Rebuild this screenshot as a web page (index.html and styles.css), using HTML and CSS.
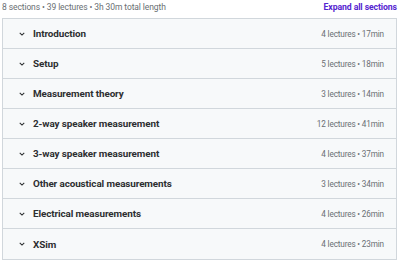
FILE: index.html
```html
<!DOCTYPE html>
<html lang="en">
  <head>
    <meta charset="UTF-8" />
    <meta name="viewport" content="width=device-width, initial-scale=1.0" />
    <title>Course content</title>
    <link rel="stylesheet" href="styles.css">
  </head>
  <body>
    <div class="content">
      <div class="summary">
        <span>8 sections • 39 lectures • 3h 30m total length</span>
        <a class="expand-all">Expand all sections</a>
      </div>

      <div class="sections">
        <div class="section">
          <span class="chevron"><svg viewBox="0 0 8 5"><path d="M1 1l3 3 3-3" /></svg></span>
          <span class="title">Introduction</span>
          <span class="meta">4 lectures • 17min</span>
        </div>
        <div class="section">
          <span class="chevron"><svg viewBox="0 0 8 5"><path d="M1 1l3 3 3-3" /></svg></span>
          <span class="title">Setup</span>
          <span class="meta">5 lectures • 18min</span>
        </div>
        <div class="section">
          <span class="chevron"><svg viewBox="0 0 8 5"><path d="M1 1l3 3 3-3" /></svg></span>
          <span class="title">Measurement theory</span>
          <span class="meta">3 lectures • 14min</span>
        </div>
        <div class="section">
          <span class="chevron"><svg viewBox="0 0 8 5"><path d="M1 1l3 3 3-3" /></svg></span>
          <span class="title">2-way speaker measurement</span>
          <span class="meta">12 lectures • 41min</span>
        </div>
        <div class="section">
          <span class="chevron"><svg viewBox="0 0 8 5"><path d="M1 1l3 3 3-3" /></svg></span>
          <span class="title">3-way speaker measurement</span>
          <span class="meta">4 lectures • 37min</span>
        </div>
        <div class="section">
          <span class="chevron"><svg viewBox="0 0 8 5"><path d="M1 1l3 3 3-3" /></svg></span>
          <span class="title">Other acoustical measurements</span>
          <span class="meta">3 lectures • 34min</span>
        </div>
        <div class="section">
          <span class="chevron"><svg viewBox="0 0 8 5"><path d="M1 1l3 3 3-3" /></svg></span>
          <span class="title">Electrical measurements</span>
          <span class="meta">4 lectures • 26min</span>
        </div>
        <div class="section">
          <span class="chevron"><svg viewBox="0 0 8 5"><path d="M1 1l3 3 3-3" /></svg></span>
          <span class="title">XSim</span>
          <span class="meta">4 lectures • 23min</span>
        </div>
      </div>
    </div>
  </body>
</html>
```

FILE: styles.css
```css
* {
  box-sizing: border-box;
}

body {
  margin: 0;
  font-family: Roboto, "Noto Sans", Arial, sans-serif;
  background: white;
  color: #2d2f31;
}

.content {
  padding: 0 3px 0 2px;
}

.summary {
  display: flex;
  justify-content: space-between;
  align-items: center;
  height: 16px;
  margin-top: -1px;
  font-size: 8.5px;
  letter-spacing: -0.1px;
  color: #6a6f73;
}

.expand-all {
  color: #5624d0;
  font-size: 8.7px;
  font-weight: bold;
  cursor: pointer;
}

.sections {
  margin-top: 3px;
  border: 1px solid #d1d7dc;
}

.section {
  display: flex;
  align-items: center;
  height: 30px;
  padding: 0 12px 0 16px;
  background: #f7f9fa;
  border-bottom: 1px solid #d1d7dc;
}

.section:last-child {
  border-bottom: none;
}

.chevron {
  display: flex;
  width: 14px;
}

.chevron svg {
  width: 6px;
  height: 4px;
  fill: none;
  stroke: #2d2f31;
  stroke-width: 1.4;
}

.title {
  flex: 1;
  font-size: 9.9px;
  font-weight: bold;
  letter-spacing: -0.1px;
}

.meta {
  font-size: 8.2px;
  letter-spacing: -0.15px;
  color: #6a6f73;
}
```
